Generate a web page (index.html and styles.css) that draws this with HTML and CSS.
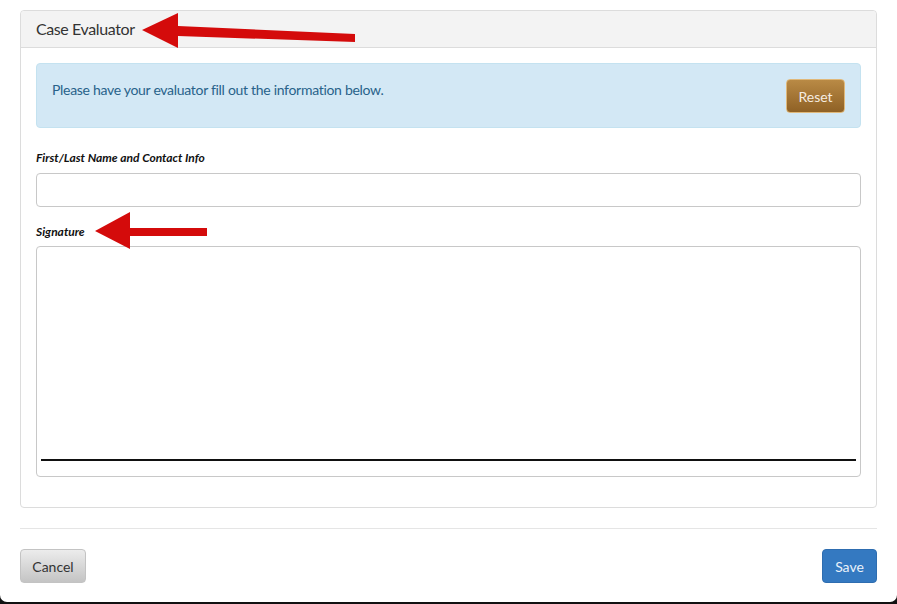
FILE: index.html
```html
<!DOCTYPE html>
<html>
<head>
<meta charset="utf-8">
<link rel="stylesheet" href="styles.css">
</head>
<body>
<div class="window">
  <div class="content">
    <div class="panel">
      <div class="panel-heading">Case Evaluator</div>
      <div class="panel-body">
        <div class="alert">
          <span class="alert-text">Please have your evaluator fill out the information below.</span>
          <button class="btn btn-reset">Reset</button>
        </div>
        <label class="field-label">First/Last Name and Contact Info</label>
        <div class="input"></div>
        <label class="field-label sig-label">Signature</label>
        <div class="signature"><div class="sig-line"></div></div>
      </div>
    </div>
    <hr class="divider">
    <div class="footer">
      <button class="btn btn-cancel">Cancel</button>
      <button class="btn btn-save">Save</button>
    </div>
  </div>
  <svg class="arrows" width="897" height="604" viewBox="0 0 897 604">
    <polygon points="142,30 178,13 178,26 355,34 355,42 178,36 178,48" fill="#d40b0b"/>
    <polygon points="95,231 130,212 130,228 207,228 207,236 130,236 130,249" fill="#d40b0b"/>
  </svg>
</div>
</body>
</html>
```
FILE: styles.css
```css
html, body {
  margin: 0;
  padding: 0;
  background: #111;
}
body {
  width: 897px;
  height: 604px;
  overflow: hidden;
  font-family: "Lato", "Noto Sans", sans-serif;
}
.window {
  position: relative;
  width: 897px;
  height: 602px;
  background: #fff;
  border-radius: 0 0 7px 7px;
  overflow: hidden;
}
.content {
  padding: 10px 20px 0 20px;
}
.panel {
  border: 1px solid #dcdcdc;
  border-radius: 4px;
  height: 498px;
  box-sizing: border-box;
}
.panel-heading {
  height: 37px;
  box-sizing: border-box;
  background: #f3f3f3;
  border-bottom: 1px solid #dcdcdc;
  border-radius: 4px 4px 0 0;
  padding: 8px 15px 0 15px;
  font-size: 16px;
  letter-spacing: -0.4px;
  color: #333;
}
.panel-body {
  padding: 15px 15px 0 15px;
}
.alert {
  height: 65px;
  box-sizing: border-box;
  background: #d3e8f5;
  border: 1px solid #c4e2f0;
  border-radius: 4px;
  display: flex;
  justify-content: space-between;
  align-items: flex-start;
  padding: 17px 15px 0 15px;
  color: #28628a;
  font-size: 14px;
}
.alert-text {
  display: block;
  letter-spacing: -0.3px;
}
.btn {
  font-family: "Lato", "Noto Sans", sans-serif;
  font-size: 14px;
  border-radius: 4px;
  height: 34px;
  box-sizing: border-box;
  cursor: pointer;
}
.btn-reset {
  margin-top: -2px;
  width: 59px;
  background: linear-gradient(#b98a45, #8f6125);
  border: 1px solid #e0b879;
  color: #f5ece0;
}
.field-label {
  display: block;
  font-weight: bold;
  font-style: italic;
  font-size: 12px;
  color: #111;
  margin-top: 22px;
  height: 23px;
}
.sig-label {
  margin-top: 17px;
  height: 22px;
}
.input {
  height: 34px;
  box-sizing: border-box;
  border: 1px solid #c8c8c8;
  border-radius: 4px;
}
.signature {
  height: 231px;
  box-sizing: border-box;
  border: 1px solid #c8c8c8;
  border-radius: 4px;
  padding: 212px 4px 0 4px;
}
.sig-line {
  height: 2px;
  background: #111;
}
.divider {
  margin: 20px 0 0 0;
  border: 0;
  border-top: 1px solid #e5e5e5;
  height: 0;
}
.footer {
  display: flex;
  justify-content: space-between;
  margin-top: 20px;
}
.btn-cancel {
  width: 66px;
  background: linear-gradient(#ececec, #c4c4c4);
  border: 1px solid #c3c3c3;
  color: #333;
}
.btn-save {
  width: 55px;
  background: #3479c1;
  border: 1px solid #2e6db0;
  color: #eaf2fa;
}
.arrows {
  position: absolute;
  left: 0;
  top: 0;
  pointer-events: none;
}
```
